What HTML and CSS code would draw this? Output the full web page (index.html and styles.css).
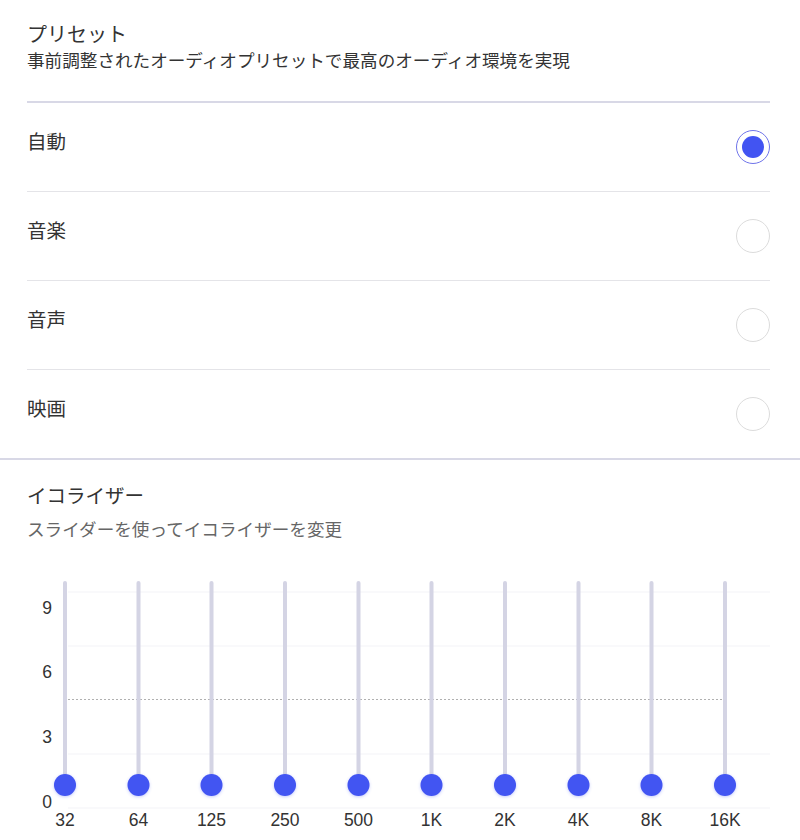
FILE: index.html
```html
<!DOCTYPE html>
<html lang="ja">
<head>
<meta charset="utf-8">
<link rel="stylesheet" href="styles.css">
</head>
<body>
<section class="preset">
  <h1 class="title">プリセット</h1>
  <p class="subtitle">事前調整されたオーディオプリセットで最高のオーディオ環境を実現</p>
  <ul class="list">
    <li class="row"><span class="label">自動</span><span class="radio checked"></span></li>
    <li class="row"><span class="label">音楽</span><span class="radio"></span></li>
    <li class="row"><span class="label">音声</span><span class="radio"></span></li>
    <li class="row"><span class="label">映画</span><span class="radio"></span></li>
  </ul>
</section>
<section class="eq">
  <h2 class="eq-title">イコライザー</h2>
  <p class="eq-sub">スライダーを使ってイコライザーを変更</p>
</section>
<svg class="chart" width="800" height="270" viewBox="0 0 800 270">
  <defs>
    <filter id="sh" x="-50%" y="-50%" width="200%" height="200%">
      <feDropShadow dx="0" dy="1" stdDeviation="1.5" flood-color="#4254f2" flood-opacity="0.3"/>
    </filter>
  </defs>
  <g stroke="#f3f3f7" stroke-width="1">
    <line x1="68" y1="21" x2="770" y2="21"/>
    <line x1="68" y1="75" x2="770" y2="75"/>
    <line x1="68" y1="183" x2="770" y2="183"/>
    <line x1="68" y1="237" x2="770" y2="237"/>
  </g>
  <line x1="68" y1="128.5" x2="725" y2="128.5" stroke="#b0b0b0" stroke-width="1" stroke-dasharray="2 2"/>
  <g class="ylab" text-anchor="end">
    <text x="52" y="43">9</text>
    <text x="52" y="107">6</text>
    <text x="52" y="172">3</text>
    <text x="52" y="237">0</text>
  </g>
  <g stroke="#d4d4e4" stroke-width="4" stroke-linecap="round">
    <line x1="65" y1="12" x2="65" y2="214"/>
    <line x1="138.5" y1="12" x2="138.5" y2="214"/>
    <line x1="211.5" y1="12" x2="211.5" y2="214"/>
    <line x1="285" y1="12" x2="285" y2="214"/>
    <line x1="358.5" y1="12" x2="358.5" y2="214"/>
    <line x1="431.5" y1="12" x2="431.5" y2="214"/>
    <line x1="505" y1="12" x2="505" y2="214"/>
    <line x1="578.5" y1="12" x2="578.5" y2="214"/>
    <line x1="651.5" y1="12" x2="651.5" y2="214"/>
    <line x1="725" y1="12" x2="725" y2="214"/>
  </g>
  <g fill="#4254f2" filter="url(#sh)">
    <circle cx="65" cy="214" r="11"/>
    <circle cx="138.5" cy="214" r="11"/>
    <circle cx="211.5" cy="214" r="11"/>
    <circle cx="285" cy="214" r="11"/>
    <circle cx="358.5" cy="214" r="11"/>
    <circle cx="431.5" cy="214" r="11"/>
    <circle cx="505" cy="214" r="11"/>
    <circle cx="578.5" cy="214" r="11"/>
    <circle cx="651.5" cy="214" r="11"/>
    <circle cx="725" cy="214" r="11"/>
  </g>
  <g class="xlab" text-anchor="middle">
    <text x="65" y="255">32</text>
    <text x="138.5" y="255">64</text>
    <text x="211.5" y="255">125</text>
    <text x="285" y="255">250</text>
    <text x="358.5" y="255">500</text>
    <text x="431.5" y="255">1K</text>
    <text x="505" y="255">2K</text>
    <text x="578.5" y="255">4K</text>
    <text x="651.5" y="255">8K</text>
    <text x="725" y="255">16K</text>
  </g>
</svg>
</body>
</html>
```

FILE: styles.css
```css
html, body {
  margin: 0;
  padding: 0;
  background: #ffffff;
}
body {
  width: 800px;
  font-family: "Noto Sans CJK JP", "Noto Sans", sans-serif;
  color: #333333;
  overflow: hidden;
}
.preset {
  padding: 0 30px 0 27px;
  border-bottom: 2px solid #d8d8e6;
}
.title {
  margin: 0;
  padding-top: 19px;
  font-size: 20px;
  font-weight: 400;
  line-height: 29px;
  color: #333333;
}
.subtitle {
  margin: 0;
  font-size: 17.6px;
  line-height: 24px;
  color: #333333;
}
.list {
  list-style: none;
  margin: 29px 0 0;
  padding: 0;
  border-top: 2px solid #d8d8e6;
}
.row {
  display: flex;
  align-items: center;
  justify-content: space-between;
  height: 88px;
  border-bottom: 1px solid #e4e4e8;
}
.row:last-child {
  border-bottom: none;
}
.label {
  font-size: 19.5px;
  line-height: 26px;
  margin-top: -13px;
}
.radio {
  width: 32px;
  height: 32px;
  border-radius: 50%;
  border: 1px solid #dcdcdc;
  box-sizing: content-box;
  display: flex;
  align-items: center;
  justify-content: center;
}
.radio.checked {
  border-color: #6f74ea;
}
.radio.checked::after {
  content: "";
  width: 22px;
  height: 22px;
  border-radius: 50%;
  background: #4254f2;
}
.eq {
  padding: 0 27px;
}
.eq-title {
  margin: 0;
  padding-top: 21px;
  font-size: 19.5px;
  font-weight: 400;
  line-height: 28px;
  color: #333333;
}
.eq-sub {
  margin: 8px 0 0;
  font-size: 17.6px;
  line-height: 24px;
  color: #666666;
}
.chart {
  display: block;
  margin-top: 30px;
}
.chart text {
  font-family: "Liberation Sans", Arial, sans-serif;
  font-size: 17.5px;
  fill: #333333;
}
```
